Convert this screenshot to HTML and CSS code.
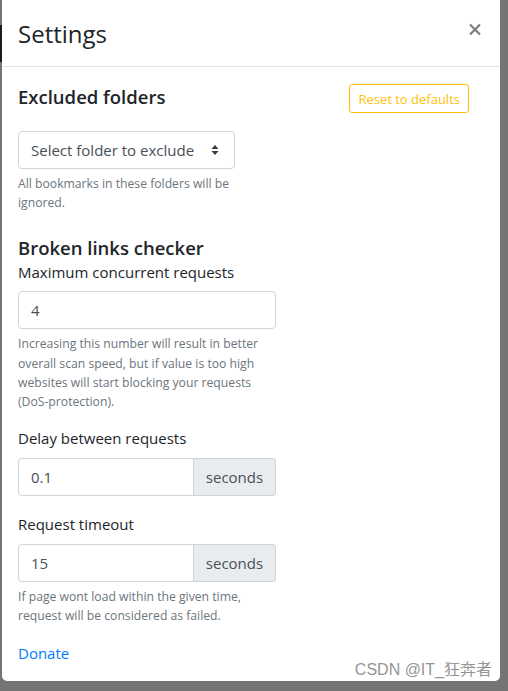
FILE: index.html
```html
<!DOCTYPE html>
<html>
<head>
<meta charset="utf-8">
<link rel="stylesheet" href="styles.css">
</head>
<body>
<div class="backdrop-piece"></div>
<div class="modal">
  <div class="modal-header">
    <h5 class="modal-title">Settings</h5>
    <svg class="close" width="12" height="13" viewBox="0 0 12 13"><path d="M1 1.5 L11 11.5 M11 1.5 L1 11.5" stroke="#7d7d7d" stroke-width="2.2" fill="none"/></svg>
  </div>
  <div class="modal-body">
    <div class="title-row">
      <h5 class="section-title first">Excluded folders</h5>
      <button class="btn-reset">Reset to defaults</button>
    </div>
    <div class="select-box">
      <span>Select folder to exclude</span>
      <svg class="arrows" width="8" height="10" viewBox="0 0 8 10"><path d="M4 0 L7.5 4 H0.5 Z M4 10 L7.5 6 H0.5 Z" fill="#343a40"/></svg>
    </div>
    <p class="help narrow">All bookmarks in these folders will be ignored.</p>

    <h5 class="section-title second">Broken links checker</h5>
    <label class="label">Maximum concurrent requests</label>
    <div class="input">4</div>
    <p class="help">Increasing this number will result in better overall scan speed, but if value is too high websites will start blocking your requests (DoS-protection).</p>

    <label class="label spaced">Delay between requests</label>
    <div class="input-group">
      <div class="input grouped">0.1</div>
      <div class="addon">seconds</div>
    </div>

    <label class="label spaced later">Request timeout</label>
    <div class="input-group">
      <div class="input grouped">15</div>
      <div class="addon">seconds</div>
    </div>
    <p class="help help-tight">If page wont load within the given time, request will be considered as failed.</p>

    <a class="donate" href="#">Donate</a>
  </div>
  <div class="watermark">CSDN @IT_狂奔者</div>
</div>
</body>
</html>
```
FILE: styles.css
```css
* { box-sizing: border-box; }
html, body { margin: 0; padding: 0; }
body {
  background: #757575;
  width: 508px;
  height: 691px;
  overflow: hidden;
  font-family: "Open Sans", "Noto Sans", sans-serif;
  color: #212529;
  position: relative;
}
.backdrop-piece {
  position: absolute;
  left: 0;
  top: 25px;
  width: 2px;
  height: 37px;
  background: #1b1b1b;
}
.modal {
  position: relative;
  margin-left: 2px;
  width: 498px;
  height: 681px;
  background: #fff;
  border-radius: 0 0 5px 5px;
}
.modal-header {
  height: 67px;
  border-bottom: 1px solid #dee2e6;
  display: flex;
  align-items: center;
  justify-content: space-between;
  padding: 2px 19px 0 16px;
}
.modal-title {
  margin: 0;
  font-size: 24px;
  font-weight: 400;
  line-height: 1.2;
}
.close {
  display: block;
  margin-top: -10px;
}
.modal-body {
  padding: 16px;
}
.title-row {
  display: flex;
  justify-content: space-between;
  align-items: flex-start;
  height: 31px;
}
.section-title {
  margin: 0;
  font-size: 18.5px;
  font-weight: 600;
  line-height: 24px;
}
.section-title.first { margin-top: 2px; }
.section-title.second { margin-top: 24px; }
.btn-reset {
  margin-top: 1px;
  margin-right: 15px;
  height: 29px;
  padding: 0 8px;
  border: 1px solid #ffc107;
  border-radius: 3px;
  background: #fff;
  color: #ffc107;
  font-family: inherit;
  font-size: 13px;
}
.select-box {
  margin-top: 17px;
  width: 217px;
  height: 38px;
  border: 1px solid #ced4da;
  border-radius: 4px;
  display: flex;
  align-items: center;
  justify-content: space-between;
  padding: 0 15px 0 12px;
  font-size: 15px;
  color: #495057;
}
.arrows { flex: none; }
.help {
  margin: 5px 0 0;
  font-size: 12.2px;
  line-height: 19.2px;
  color: #6c757d;
  width: 258px;
}
.help.narrow { width: 230px; }
.help-tight { margin-top: 5px; }
.label {
  display: block;
  font-size: 15px;
  line-height: 24px;
  margin-bottom: 7px;
}
.label.spaced { margin-top: 15px; margin-bottom: 8px; }
.label.spaced.later { margin-top: 16px; }
.input {
  width: 258px;
  height: 38px;
  border: 1px solid #ced4da;
  border-radius: 4px;
  padding: 0 12px;
  display: flex;
  align-items: center;
  font-size: 15px;
  color: #495057;
}
.input-group {
  display: flex;
  width: 258px;
  height: 38px;
}
.input.grouped {
  width: 176px;
  border-radius: 4px 0 0 4px;
}
.addon {
  flex: 1;
  border: 1px solid #ced4da;
  border-left: none;
  border-radius: 0 4px 4px 0;
  background: #e9ecef;
  display: flex;
  align-items: center;
  justify-content: center;
  font-size: 15px;
  color: #495057;
}
.donate {
  display: inline-block;
  margin-top: 15px;
  font-size: 15px;
  line-height: 24px;
  color: #007bff;
  text-decoration: none;
}
.watermark {
  position: absolute;
  right: 8px;
  bottom: 1px;
  font-family: "Liberation Sans", "Noto Sans CJK SC", sans-serif;
  font-size: 16px;
  color: #959595;
  line-height: 20px;
}
```
